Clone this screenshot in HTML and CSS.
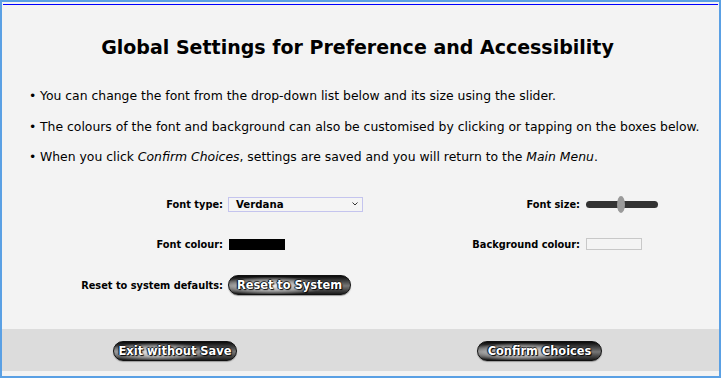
FILE: index.html
```html
<!DOCTYPE html>
<html lang="en">
<head>
<meta charset="utf-8">
<title>Global Settings</title>
<link rel="stylesheet" href="styles.css">
</head>
<body>
<div class="frame">
  <div class="topline"></div>
  <h1 class="title">Global Settings for Preference and Accessibility</h1>
  <ul class="notes">
    <li><span class="dot">•</span>You can change the font from the drop-down list below and its size using the slider.</li>
    <li><span class="dot">•</span>The colours of the font and background can also be customised by clicking or tapping on the boxes below.</li>
    <li><span class="dot">•</span>When you click <em>Confirm Choices</em>, settings are saved and you will return to the <em>Main Menu</em>.</li>
  </ul>
  <div class="settings">
    <div class="label">Font type:</div>
    <div class="ctrl">
      <div class="select"><span>Verdana</span><svg class="chev" width="6" height="4" viewBox="0 0 6 4"><path d="M0.5 0.5 L3 3 L5.5 0.5" fill="none" stroke="#333" stroke-width="1"/></svg></div>
    </div>
    <div class="label">Font size:</div>
    <div class="ctrl">
      <div class="slider"><div class="track"></div><div class="thumb"></div></div>
    </div>

    <div class="label">Font colour:</div>
    <div class="ctrl"><div class="swatch swatch-black"></div></div>
    <div class="label">Background colour:</div>
    <div class="ctrl"><div class="swatch swatch-bg"></div></div>

    <div class="label">Reset to system defaults:</div>
    <div class="ctrl"><button class="pill pill-reset">Reset to System</button></div>
    <div></div>
    <div></div>
  </div>
  <div class="footer">
    <button class="pill pill-exit">Exit without Save</button>
    <button class="pill pill-confirm">Confirm Choices</button>
  </div>
</div>
</body>
</html>
```

FILE: styles.css
```css
* { box-sizing: border-box; }
html, body { margin: 0; padding: 0; background: #ffffff; }
body { font-family: "DejaVu Sans", Verdana, sans-serif; color: #000; }

.frame {
  width: 721px;
  height: 378px;
  border: 2px solid #5aa0e4;
  background: #f3f3f3;
  display: flex;
  flex-direction: column;
}

.topline {
  height: 1px;
  margin: 2px 1px 0 1px;
  background: #0000ff;
}

.title {
  margin: 30px 0 0 0;
  padding-right: 6px;
  font-family: "DejaVu Sans", sans-serif;
  font-weight: bold;
  font-size: 19px;
  line-height: 24px;
  text-align: center;
}

.notes {
  list-style: none;
  margin: 28px 0 0 0;
  padding: 0 0 0 27px;
  display: flex;
  flex-direction: column;
  gap: 13.5px;
  font-size: 12.4px;
  line-height: 17px;
}
.notes .dot { display: inline-block; width: 11px; }

.settings {
  margin-top: 29px;
  display: grid;
  grid-template-columns: 221px 140px 207px 120px;
  grid-template-rows: 20px 20px 22px;
  column-gap: 5px;
  row-gap: 20px;
  align-items: center;
}
.label {
  text-align: right;
  font-weight: bold;
  font-size: 9.8px;
}
.ctrl { display: flex; align-items: center; }

.select {
  width: 135px;
  height: 15px;
  border: 1px solid #c4c4ee;
  background: #f4f4f4;
  display: flex;
  align-items: center;
  justify-content: space-between;
  padding: 0 4px 0 7px;
  font-weight: bold;
  font-size: 10.2px;
}
.chev { display: block; }

.slider {
  position: relative;
  width: 72px;
  height: 20px;
  margin-left: 1px;
}
.track {
  position: absolute;
  left: 0; right: 0; top: 7px;
  height: 7px;
  border-radius: 4px;
  background: #333333;
}
.thumb {
  position: absolute;
  left: 31px; top: 2px;
  width: 8px; height: 17px;
  border-radius: 50%;
  background: #9a9a9a;
}

.swatch { height: 11px; width: 56px; margin-left: 1px; }
.swatch-black { background: #000; }
.swatch-bg { border: 1px solid #c8c8c8; background: #f4f4f4; width: 56px; height: 12px; }

.pill {
  font-family: "DejaVu Sans", Verdana, sans-serif;
  font-weight: bold;
  font-size: 11.4px;
  color: #fff;
  height: 20px;
  padding: 0;
  border: 1px solid #111;
  border-radius: 10px;
  background:
    radial-gradient(ellipse 55% 60% at 35% 55%, rgba(245,245,245,1) 0%, rgba(190,190,190,0.9) 40%, rgba(90,90,90,0) 85%),
    linear-gradient(to bottom, #0a0a0a 0%, #444 30%, #777 55%, #1a1a1a 100%);
  text-shadow: 1px 1px 1px #000, -1px 0 1px #000, 0 -1px 1px #222;
  box-shadow: 0 1px 1px #999;
  line-height: 18px;
  cursor: pointer;
}
.pill-reset { width: 123px; }
.pill-exit { width: 124px; }
.pill-confirm { width: 125px; }

.footer {
  margin-top: auto;
  margin-bottom: 5px;
  height: 42px;
  background: #dcdcdc;
  display: flex;
  align-items: center;
  padding: 1px 0 0 111px;
  gap: 240px;
}
```
